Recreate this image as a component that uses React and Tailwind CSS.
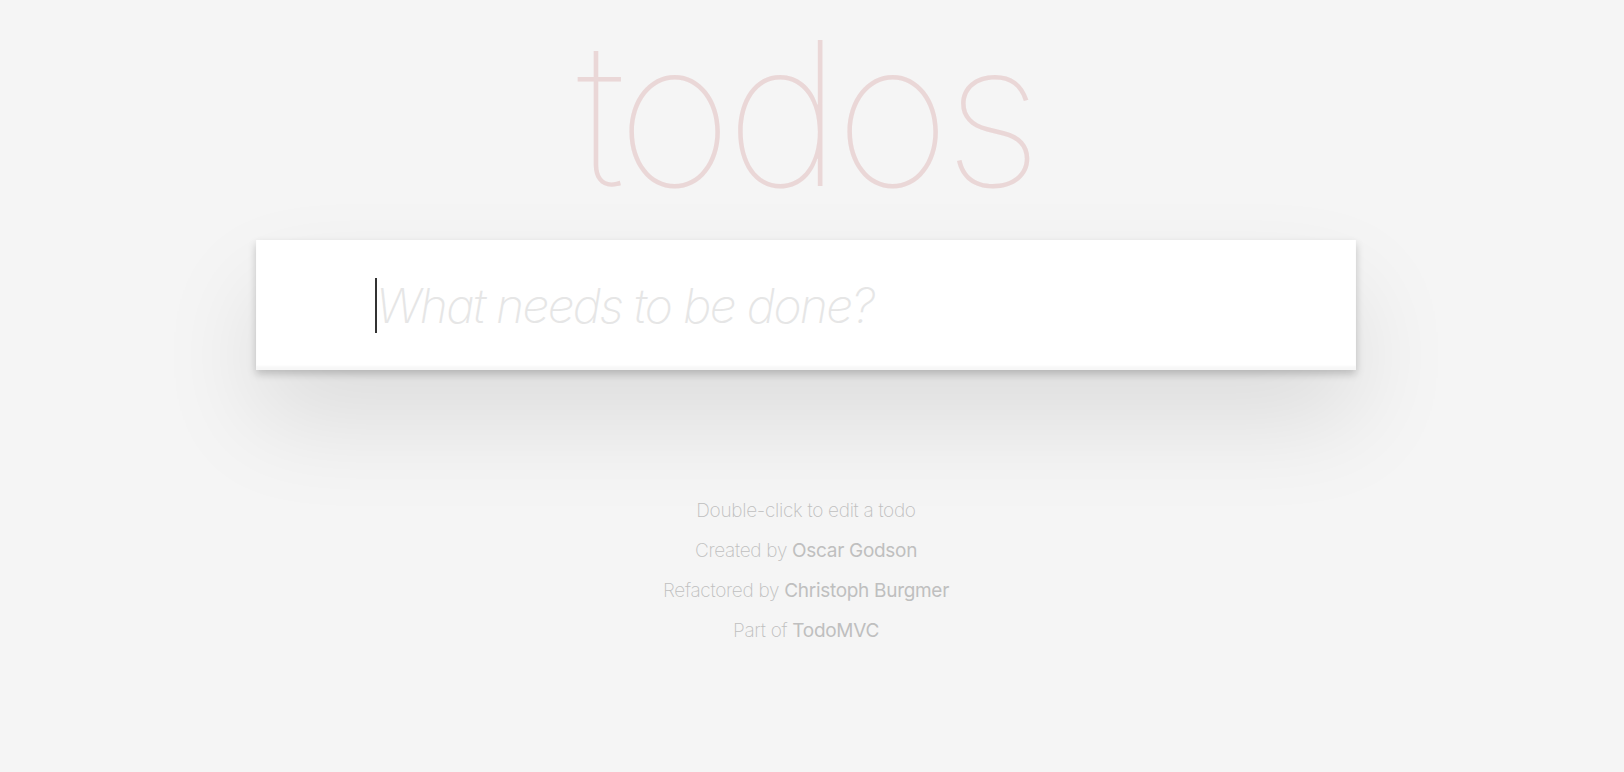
import React from "react";

const FONT = { fontFamily: "Inter, 'Helvetica Neue', Helvetica, Arial, sans-serif" };

const Info = () => (
  <footer className="mt-[131px] text-center text-[19px] leading-[20px] tracking-[-0.3px] font-extralight text-[#bfbfbf]">
    <p className="mb-[20px]">Double-click to edit a todo</p>
    <p className="mb-[20px]">
      Created by <a className="font-normal">Oscar Godson</a>
    </p>
    <p className="mb-[20px]">
      Refactored by <a className="font-normal">Christoph Burgmer</a>
    </p>
    <p>
      Part of <a className="font-normal">TodoMVC</a>
    </p>
  </footer>
);

export default function App() {
  return (
    <div className="min-h-screen bg-[#f5f5f5] pr-3 font-light" style={FONT}>
      <div className="mx-auto w-[1100px] pt-[3px]">
        <h1 className="text-center text-[200px] leading-[220px] font-thin tracking-[-7px] px-4 text-[#ead7d7] mb-[17px]">
          todos
        </h1>

        {/* new todo card */}
        <section className="relative bg-white shadow-[0_4px_8px_0_rgba(0,0,0,0.2),0_50px_100px_0_rgba(0,0,0,0.1)]">
          <input
            placeholder="What needs to be done?"
            className="block w-full h-[130px] pl-[120px] pr-8 py-8 text-[48px] leading-[66px] tracking-[-1.7px] font-light text-[#4d4d4d] caret-[#333] bg-transparent outline-none shadow-[inset_0_-4px_2px_rgba(0,0,0,0.03)] placeholder:italic placeholder:font-extralight placeholder:text-[#e6e6e6]"
          />
          {/* text caret */}
          <span className="pointer-events-none absolute left-[119px] top-[38px] h-[55px] w-[2px] bg-[#333]" />
        </section>

        <Info />
      </div>
    </div>
  );
}
